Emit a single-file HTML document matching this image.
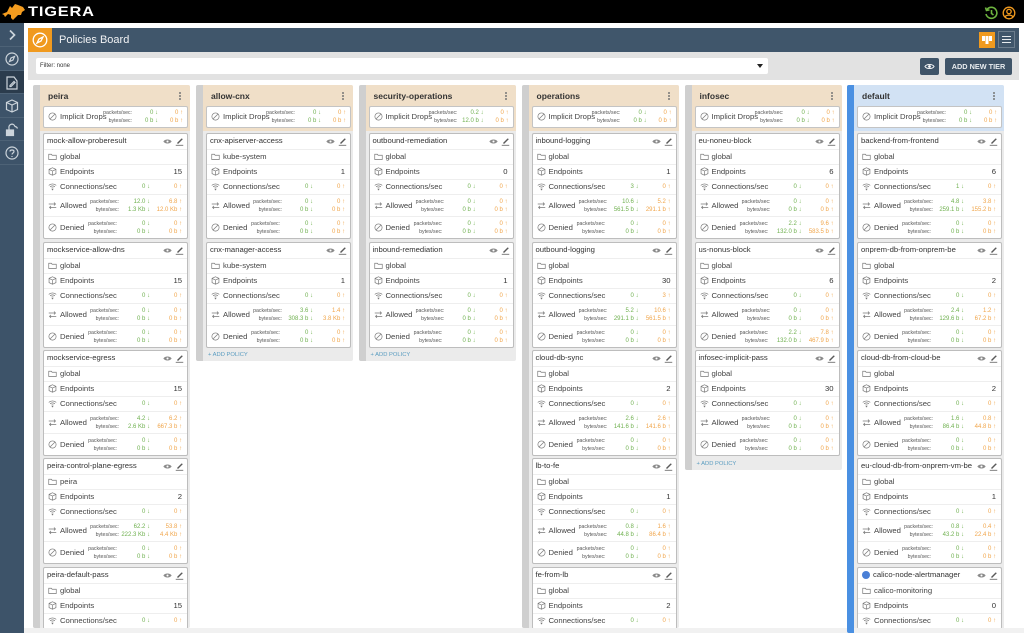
<!DOCTYPE html>
<html><head><meta charset="utf-8"><title>Policies Board</title>
<style>
*{box-sizing:border-box}
html{background:#fff}
html,body{margin:0;padding:0;width:1024px;height:633px;overflow:hidden}
body{position:relative;background:#fff;font-family:"Liberation Sans",sans-serif;color:#444;filter:blur(.35px)}
.top{position:absolute;left:0;top:0;width:1024px;height:23px;background:#000}
.brand{position:absolute;left:28px;top:3px;color:#fff;font-weight:bold;font-size:14px;letter-spacing:.7px;line-height:17px;transform:scaleX(1.17);transform-origin:0 0}
.side{position:absolute;left:0;top:23px;width:24px;height:610px;background:#3d5369}
.side div{position:absolute;left:0;width:24px;height:23.5px;border-bottom:1px solid #4d6276}
.side svg{position:absolute;left:5px;top:5px;width:14px;height:14px;fill:none;stroke:#ccd4db;stroke-width:1.2}
.tb{position:absolute;left:28px;top:28px;width:991px;height:24px;background:#40566b}
.tb span{position:absolute;left:31px;top:5px;color:#f0f2f4;font-size:11px;line-height:14px}
.or{position:absolute;left:0;top:0;width:24px;height:24px;background:#f09a1f}
.fb{position:absolute;left:28px;top:52px;width:991px;height:28px;background:#e2e2e2}
.fi{position:absolute;left:8px;top:6px;width:732px;height:16px;background:#fff;border-radius:2px;font-size:6px;line-height:16px;padding-left:4px;color:#333}
.btn{position:absolute;background:#3f5468;border-radius:2px;color:#e8ecef;font-size:7.3px;font-weight:bold;text-align:center;line-height:17px}
.col{position:absolute;top:85px;width:157px;background:#ebebeb;border-radius:2px;overflow:hidden}
.col:before{content:"";position:absolute;left:0;top:0;bottom:0;width:7px;background:#cfcfcf}
.hd{position:absolute;left:7px;right:0;top:0;height:46px;background:#f0dfc8}
.col h3{position:absolute;left:15px;top:6px;margin:0;font-size:8.5px;line-height:10px;color:#333}
.dots{position:absolute;right:9px;top:7px;width:2px;height:2px;border-radius:1px;background:#777;box-shadow:0 3px #777,0 6px #777;z-index:2}
.im{position:absolute;left:10px;top:21px;width:145px;height:22px;background:#fff;border:1px solid #c4c4c4;border-radius:2px;font-size:7.7px}
.im b{font-weight:normal;position:absolute;left:16px;top:5px;line-height:10px;white-space:nowrap}
.c{position:absolute;left:10px;width:145px;height:106px;background:#fff;border:1px solid #bdbdbd;border-radius:2px;font-size:7.7px;line-height:10px}
.c.e{height:62px;border-bottom:0}
.c h4{margin:0;position:absolute;left:3px;top:2px;font-weight:normal;font-size:7.7px;line-height:10px;white-space:nowrap;color:#333}
.c p{margin:0;position:absolute;left:0;right:0;height:15px;border-top:1px solid #eee;padding:2px 0 0 16px;white-space:nowrap}
.c p em{position:absolute;right:5px;top:2px;font-style:normal;color:#333}
.c>svg,.im>svg,.c p svg,.k svg{position:absolute;fill:none;stroke:#777;stroke-width:.9}
.ey{left:119px;top:3px;width:9px;height:9px}
.pe{left:131px;top:3px;width:9px;height:9px}
.ic{left:4px;top:2px;width:9px;height:9px}
.k{position:absolute;left:0;right:0;border-top:1px solid #eee;padding-left:16px;white-space:nowrap}
.k>b{font-weight:normal;position:absolute;left:16px}
.l,.d,.u{position:absolute;font-size:5.200px;line-height:8.4px;text-align:right;white-space:nowrap}
.l{color:#555}
.d,.g{color:#6fb04f}
.u,.o{color:#f0a54a}
.g,.o{position:absolute;top:3px;font-size:6px;line-height:8px;white-space:nowrap}
.g{right:37px}.o{right:5px}
.d{right:37px;font-size:6px}.u{right:5px;font-size:6px}
.add{position:absolute;left:12px;bottom:2px;font-size:5.8px;line-height:8px;color:#5a9cc0}
.bot{position:absolute;left:24px;top:628px;width:1000px;height:5px;background:#f1f1f1}
</style></head><body>
<svg width="0" height="0" style="position:absolute"><defs>
<symbol id="eye" viewBox="0 0 12 12"><path d="M1 6c2-3 8-3 10 0-2 3-8 3-10 0z" fill="#8a8a8a" stroke="#8a8a8a"/><circle cx="6" cy="6" r="1.4" fill="#fff" stroke="none"/></symbol>
<symbol id="pen" viewBox="0 0 12 12"><path d="M3 8L9 2l1 1-6 6z" fill="#555" stroke="#555" stroke-width=".6"/><path d="M1 11h10" stroke="#555"/></symbol>
<symbol id="ban" viewBox="0 0 12 12"><circle cx="6" cy="6" r="4.8"/><path d="M2.8 9.2l6.4-6.4"/></symbol>
<symbol id="fol" viewBox="0 0 12 12"><path d="M1 3h3.5l1 1.3H11v5.7H1z"/></symbol>
<symbol id="cub" viewBox="0 0 12 12"><path d="M6 1l4.6 2.2v5.6L6 11 1.4 8.8V3.2zM1.4 3.2L6 5.4l4.6-2.2M6 5.4V11"/></symbol>
<symbol id="wif" viewBox="0 0 12 12"><path d="M1 4.5c3-2.6 7-2.6 10 0M2.8 6.4c2-1.6 4.4-1.6 6.4 0M4.6 8.2c1-.7 1.8-.7 2.8 0"/><circle cx="6" cy="10" r=".6" fill="#666"/></symbol>
<symbol id="swp" viewBox="0 0 12 12"><path d="M1 4h9M8 2l2 2-2 2M11 8.500H2M4 6.500l-2 2 2 2"/></symbol>
</defs></svg>

<div class="top">
<svg style="position:absolute;left:1px;top:2px" width="26" height="20" viewBox="0 0 26 20"><path d="M1 12l5-2 3-6 2 2 3-4 3 1 5 2 2 3-3 2-1 3-3 0-3 3-2 2-2-2 0-3-3-1-3 3-1-2z" fill="#f39c1f"/></svg>
<div class="brand">TIGERA</div>
<svg style="position:absolute;left:984px;top:6px" width="14" height="14" viewBox="0 0 14 14" fill="none" stroke="#6db33f" stroke-width="1.6"><path d="M3 3.500A5.500 5.500 0 1 1 2 8M1.500 1.500l1 3 3-.6M7.500 4v3.500l2 1.500"/></svg>
<svg style="position:absolute;left:1002px;top:6px" width="14" height="14" viewBox="0 0 14 14" fill="none" stroke="#f09a1f" stroke-width="1.3"><circle cx="7" cy="7" r="5.800"/><circle cx="7" cy="5.500" r="2.200"/><path d="M3 11c1-2.500 7-2.500 8 0"/></svg>
</div>

<div class="side">
<div style="top:0"><svg viewBox="0 0 14 14"><path d="M5 2.500l4.500 4.500-4.500 4.500" stroke-width="1.700"/></svg></div>
<div style="top:24px"><svg viewBox="0 0 14 14"><circle cx="7" cy="7" r="6"/><path d="M4.500 9.500L6 6l3.500-1.500L8 8z"/></svg></div>
<div style="top:47.500px;background:#2b3c4d"><svg viewBox="0 0 14 14"><path d="M9 1H2v12h10V5zM5 9.500l4-4 1 1-4 4H5z"/></svg></div>
<div style="top:71px"><svg viewBox="0 0 14 14"><path d="M7 1l5.500 2.500v7L7 13l-5.500-2.500v-7zM1.500 3.500L7 6l5.500-2.500M7 6v7"/></svg></div>
<div style="top:94.500px"><svg viewBox="0 0 14 14"><rect x="1.500" y="7" width="7" height="5.500" fill="#ccd4db"/><path d="M4 7V5a3 3 0 0 1 6-1.500 3 3 0 0 1 2.500 2"/></svg></div>
<div style="top:118px"><svg viewBox="0 0 14 14"><circle cx="7" cy="7" r="6"/><path d="M5 5.500C5 3.500 9 3.500 9 5.500 9 7 7 7 7 8.500M7 10v1"/></svg></div>
</div>

<div class="tb"><div class="or"><svg style="position:absolute;left:4px;top:4px" width="16" height="16" viewBox="0 0 16 16" fill="none" stroke="#fff" stroke-width="1.300"><circle cx="8" cy="8" r="6.800"/><path d="M5 11l2-4 4-2-2 4z"/></svg></div><span>Policies Board</span>
<div style="position:absolute;left:951px;top:4px;width:16px;height:16px;background:#f09a1f"><svg style="position:absolute;left:3px;top:3px" width="10" height="10" viewBox="0 0 10 10" fill="#fff"><path d="M0 1h3v5H0zM3.500 1h3v8h-3zM7 1h3v5H7z"/></svg></div>
<div style="position:absolute;left:970px;top:3px;width:17px;height:17px;border:1px solid #6c7d8d"><svg style="position:absolute;left:3px;top:3px" width="9" height="9" viewBox="0 0 9 9" stroke="#e8ecef"><path d="M0 1.500h9M0 4.500h9M0 7.500h9"/></svg></div>
</div>

<div class="fb"><div class="fi">Filter: none<div style="position:absolute;right:5px;top:6px;border:3px solid transparent;border-top:4px solid #222"></div></div></div>
<div class="btn" style="left:920px;top:58px;width:19px;height:17px"><svg style="position:absolute;left:4px;top:3px" width="11" height="11" viewBox="0 0 12 12"><path d="M1 6c2-3 8-3 10 0-2 3-8 3-10 0z" fill="none" stroke="#fff"/><circle cx="6" cy="6" r="1.500" fill="#fff"/></svg></div>
<div class="btn" style="left:945px;top:58px;width:67px;height:17px">ADD NEW TIER</div>

<!-- peira -->
<div class="col" style="left:33px;height:543px"><div class="hd"></div><h3>peira</h3><div class="dots"></div>
<div class="im"><svg class="ic" style="top:5px"><use href="#ban"/></svg><b>Implicit Drops</b><span class="l" style="right:55px;top:2px">packets/sec:<br>bytes/sec:</span><span class="d" style="right:29px;top:2px">0 ↓<br>0 b ↓</span><span class="u" style="top:2px;right:4px">0 ↑<br>0 b ↑</span></div>

<div class="c" style="top:48px"><h4>mock-allow-proberesult</h4><svg class="ey"><use href="#eye"/></svg><svg class="pe"><use href="#pen"/></svg>
<p style="top:15px"><svg class="ic"><use href="#fol"/></svg>global</p>
<p style="top:30px"><svg class="ic"><use href="#cub"/></svg>Endpoints<em>15</em></p>
<p style="top:45px"><svg class="ic"><use href="#wif"/></svg>Connections/sec<span class="g">0 ↓</span><span class="o">0 ↑</span></p>
<div class="k" style="top:60px;height:23px"><svg class="ic" style="top:6px"><use href="#swp"/></svg><b style="top:6px">Allowed</b><span class="l" style="right:68px;top:3px">packets/sec:<br>bytes/sec:</span><span class="d" style="top:3px">12.0 ↓<br>1.3 Kb ↓</span><span class="u" style="top:3px">6.8 ↑<br>12.0 Kb ↑</span></div>
<div class="k" style="top:82px;height:22px"><svg class="ic" style="top:6px"><use href="#ban"/></svg><b style="top:6px">Denied</b><span class="l" style="right:70px;top:3px">packets/sec:<br>bytes/sec:</span><span class="d" style="top:3px">0 ↓<br>0 b ↓</span><span class="u" style="top:3px">0 ↑<br>0 b ↑</span></div></div>

<div class="c" style="top:156.500px"><h4>mockservice-allow-dns</h4><svg class="ey"><use href="#eye"/></svg><svg class="pe"><use href="#pen"/></svg>
<p style="top:15px"><svg class="ic"><use href="#fol"/></svg>global</p>
<p style="top:30px"><svg class="ic"><use href="#cub"/></svg>Endpoints<em>15</em></p>
<p style="top:45px"><svg class="ic"><use href="#wif"/></svg>Connections/sec<span class="g">0 ↓</span><span class="o">0 ↑</span></p>
<div class="k" style="top:60px;height:23px"><svg class="ic" style="top:6px"><use href="#swp"/></svg><b style="top:6px">Allowed</b><span class="l" style="right:68px;top:3px">packets/sec:<br>bytes/sec:</span><span class="d" style="top:3px">0 ↓<br>0 b ↓</span><span class="u" style="top:3px">0 ↑<br>0 b ↑</span></div>
<div class="k" style="top:82px;height:22px"><svg class="ic" style="top:6px"><use href="#ban"/></svg><b style="top:6px">Denied</b><span class="l" style="right:70px;top:3px">packets/sec:<br>bytes/sec:</span><span class="d" style="top:3px">0 ↓<br>0 b ↓</span><span class="u" style="top:3px">0 ↑<br>0 b ↑</span></div></div>

<div class="c" style="top:265px"><h4>mockservice-egress</h4><svg class="ey"><use href="#eye"/></svg><svg class="pe"><use href="#pen"/></svg>
<p style="top:15px"><svg class="ic"><use href="#fol"/></svg>global</p>
<p style="top:30px"><svg class="ic"><use href="#cub"/></svg>Endpoints<em>15</em></p>
<p style="top:45px"><svg class="ic"><use href="#wif"/></svg>Connections/sec<span class="g">0 ↓</span><span class="o">0 ↑</span></p>
<div class="k" style="top:60px;height:23px"><svg class="ic" style="top:6px"><use href="#swp"/></svg><b style="top:6px">Allowed</b><span class="l" style="right:68px;top:3px">packets/sec:<br>bytes/sec:</span><span class="d" style="top:3px">4.2 ↓<br>2.6 Kb ↓</span><span class="u" style="top:3px">6.2 ↑<br>667.3 b ↑</span></div>
<div class="k" style="top:82px;height:22px"><svg class="ic" style="top:6px"><use href="#ban"/></svg><b style="top:6px">Denied</b><span class="l" style="right:70px;top:3px">packets/sec:<br>bytes/sec:</span><span class="d" style="top:3px">0 ↓<br>0 b ↓</span><span class="u" style="top:3px">0 ↑<br>0 b ↑</span></div></div>

<div class="c" style="top:373px"><h4>peira-control-plane-egress</h4><svg class="ey"><use href="#eye"/></svg><svg class="pe"><use href="#pen"/></svg>
<p style="top:15px"><svg class="ic"><use href="#fol"/></svg>peira</p>
<p style="top:30px"><svg class="ic"><use href="#cub"/></svg>Endpoints<em>2</em></p>
<p style="top:45px"><svg class="ic"><use href="#wif"/></svg>Connections/sec<span class="g">0 ↓</span><span class="o">0 ↑</span></p>
<div class="k" style="top:60px;height:23px"><svg class="ic" style="top:6px"><use href="#swp"/></svg><b style="top:6px">Allowed</b><span class="l" style="right:68px;top:3px">packets/sec:<br>bytes/sec:</span><span class="d" style="top:3px">62.2 ↓<br>222.3 Kb ↓</span><span class="u" style="top:3px">53.8 ↑<br>4.4 Kb ↑</span></div>
<div class="k" style="top:82px;height:22px"><svg class="ic" style="top:6px"><use href="#ban"/></svg><b style="top:6px">Denied</b><span class="l" style="right:70px;top:3px">packets/sec:<br>bytes/sec:</span><span class="d" style="top:3px">0 ↓<br>0 b ↓</span><span class="u" style="top:3px">0 ↑<br>0 b ↑</span></div></div>

<div class="c e" style="top:481.500px"><h4>peira-default-pass</h4><svg class="ey"><use href="#eye"/></svg><svg class="pe"><use href="#pen"/></svg>
<p style="top:15px"><svg class="ic"><use href="#fol"/></svg>global</p>
<p style="top:30px"><svg class="ic"><use href="#cub"/></svg>Endpoints<em>15</em></p>
<p style="top:45px"><svg class="ic"><use href="#wif"/></svg>Connections/sec<span class="g">0 ↓</span><span class="o">0 ↑</span></p></div>
</div>

<!-- allow-cnx -->
<div class="col" style="left:196px;height:276px"><div class="hd"></div><h3>allow-cnx</h3><div class="dots"></div>
<div class="im"><svg class="ic" style="top:5px"><use href="#ban"/></svg><b>Implicit Drops</b><span class="l" style="right:55px;top:2px">packets/sec:<br>bytes/sec:</span><span class="d" style="right:29px;top:2px">0 ↓<br>0 b ↓</span><span class="u" style="top:2px;right:4px">0 ↑<br>0 b ↑</span></div>

<div class="c" style="top:48px"><h4>cnx-apiserver-access</h4><svg class="ey"><use href="#eye"/></svg><svg class="pe"><use href="#pen"/></svg>
<p style="top:15px"><svg class="ic"><use href="#fol"/></svg>kube-system</p>
<p style="top:30px"><svg class="ic"><use href="#cub"/></svg>Endpoints<em>1</em></p>
<p style="top:45px"><svg class="ic"><use href="#wif"/></svg>Connections/sec<span class="g">0 ↓</span><span class="o">0 ↑</span></p>
<div class="k" style="top:60px;height:23px"><svg class="ic" style="top:6px"><use href="#swp"/></svg><b style="top:6px">Allowed</b><span class="l" style="right:68px;top:3px">packets/sec:<br>bytes/sec:</span><span class="d" style="top:3px">0 ↓<br>0 b ↓</span><span class="u" style="top:3px">0 ↑<br>0 b ↑</span></div>
<div class="k" style="top:82px;height:22px"><svg class="ic" style="top:6px"><use href="#ban"/></svg><b style="top:6px">Denied</b><span class="l" style="right:70px;top:3px">packets/sec:<br>bytes/sec:</span><span class="d" style="top:3px">0 ↓<br>0 b ↓</span><span class="u" style="top:3px">0 ↑<br>0 b ↑</span></div></div>

<div class="c" style="top:156.500px"><h4>cnx-manager-access</h4><svg class="ey"><use href="#eye"/></svg><svg class="pe"><use href="#pen"/></svg>
<p style="top:15px"><svg class="ic"><use href="#fol"/></svg>kube-system</p>
<p style="top:30px"><svg class="ic"><use href="#cub"/></svg>Endpoints<em>1</em></p>
<p style="top:45px"><svg class="ic"><use href="#wif"/></svg>Connections/sec<span class="g">0 ↓</span><span class="o">0 ↑</span></p>
<div class="k" style="top:60px;height:23px"><svg class="ic" style="top:6px"><use href="#swp"/></svg><b style="top:6px">Allowed</b><span class="l" style="right:68px;top:3px">packets/sec:<br>bytes/sec:</span><span class="d" style="top:3px">3.6 ↓<br>308.3 b ↓</span><span class="u" style="top:3px">1.4 ↑<br>3.8 Kb ↑</span></div>
<div class="k" style="top:82px;height:22px"><svg class="ic" style="top:6px"><use href="#ban"/></svg><b style="top:6px">Denied</b><span class="l" style="right:70px;top:3px">packets/sec:<br>bytes/sec:</span><span class="d" style="top:3px">0 ↓<br>0 b ↓</span><span class="u" style="top:3px">0 ↑<br>0 b ↑</span></div></div>
<div class="add">+ ADD POLICY</div>
</div>

<!-- security-operations -->
<div class="col" style="left:358.500px;height:276px"><div class="hd"></div><h3>security-operations</h3><div class="dots"></div>
<div class="im"><svg class="ic" style="top:5px"><use href="#ban"/></svg><b>Implicit Drops</b><span class="l" style="right:55px;top:2px">packets/sec:<br>bytes/sec:</span><span class="d" style="right:29px;top:2px">0.2 ↓<br>12.0 b ↓</span><span class="u" style="top:2px;right:4px">0 ↑<br>0 b ↑</span></div>

<div class="c" style="top:48px"><h4>outbound-remediation</h4><svg class="ey"><use href="#eye"/></svg><svg class="pe"><use href="#pen"/></svg>
<p style="top:15px"><svg class="ic"><use href="#fol"/></svg>global</p>
<p style="top:30px"><svg class="ic"><use href="#cub"/></svg>Endpoints<em>0</em></p>
<p style="top:45px"><svg class="ic"><use href="#wif"/></svg>Connections/sec<span class="g">0 ↓</span><span class="o">0 ↑</span></p>
<div class="k" style="top:60px;height:23px"><svg class="ic" style="top:6px"><use href="#swp"/></svg><b style="top:6px">Allowed</b><span class="l" style="right:68px;top:3px">packets/sec:<br>bytes/sec:</span><span class="d" style="top:3px">0 ↓<br>0 b ↓</span><span class="u" style="top:3px">0 ↑<br>0 b ↑</span></div>
<div class="k" style="top:82px;height:22px"><svg class="ic" style="top:6px"><use href="#ban"/></svg><b style="top:6px">Denied</b><span class="l" style="right:70px;top:3px">packets/sec:<br>bytes/sec:</span><span class="d" style="top:3px">0 ↓<br>0 b ↓</span><span class="u" style="top:3px">0 ↑<br>0 b ↑</span></div></div>

<div class="c" style="top:156.500px"><h4>inbound-remediation</h4><svg class="ey"><use href="#eye"/></svg><svg class="pe"><use href="#pen"/></svg>
<p style="top:15px"><svg class="ic"><use href="#fol"/></svg>global</p>
<p style="top:30px"><svg class="ic"><use href="#cub"/></svg>Endpoints<em>1</em></p>
<p style="top:45px"><svg class="ic"><use href="#wif"/></svg>Connections/sec<span class="g">0 ↓</span><span class="o">0 ↑</span></p>
<div class="k" style="top:60px;height:23px"><svg class="ic" style="top:6px"><use href="#swp"/></svg><b style="top:6px">Allowed</b><span class="l" style="right:68px;top:3px">packets/sec:<br>bytes/sec:</span><span class="d" style="top:3px">0 ↓<br>0 b ↓</span><span class="u" style="top:3px">0 ↑<br>0 b ↑</span></div>
<div class="k" style="top:82px;height:22px"><svg class="ic" style="top:6px"><use href="#ban"/></svg><b style="top:6px">Denied</b><span class="l" style="right:70px;top:3px">packets/sec:<br>bytes/sec:</span><span class="d" style="top:3px">0 ↓<br>0 b ↓</span><span class="u" style="top:3px">0 ↑<br>0 b ↑</span></div></div>
<div class="add">+ ADD POLICY</div>
</div>

<!-- operations -->
<div class="col" style="left:521.500px;height:543px"><div class="hd"></div><h3>operations</h3><div class="dots"></div>
<div class="im"><svg class="ic" style="top:5px"><use href="#ban"/></svg><b>Implicit Drops</b><span class="l" style="right:55px;top:2px">packets/sec:<br>bytes/sec:</span><span class="d" style="right:29px;top:2px">0 ↓<br>0 b ↓</span><span class="u" style="top:2px;right:4px">0 ↑<br>0 b ↑</span></div>

<div class="c" style="top:48px"><h4>inbound-logging</h4><svg class="ey"><use href="#eye"/></svg><svg class="pe"><use href="#pen"/></svg>
<p style="top:15px"><svg class="ic"><use href="#fol"/></svg>global</p>
<p style="top:30px"><svg class="ic"><use href="#cub"/></svg>Endpoints<em>1</em></p>
<p style="top:45px"><svg class="ic"><use href="#wif"/></svg>Connections/sec<span class="g">3 ↓</span><span class="o">0 ↑</span></p>
<div class="k" style="top:60px;height:23px"><svg class="ic" style="top:6px"><use href="#swp"/></svg><b style="top:6px">Allowed</b><span class="l" style="right:68px;top:3px">packets/sec:<br>bytes/sec:</span><span class="d" style="top:3px">10.6 ↓<br>561.5 b ↓</span><span class="u" style="top:3px">5.2 ↑<br>291.1 b ↑</span></div>
<div class="k" style="top:82px;height:22px"><svg class="ic" style="top:6px"><use href="#ban"/></svg><b style="top:6px">Denied</b><span class="l" style="right:70px;top:3px">packets/sec:<br>bytes/sec:</span><span class="d" style="top:3px">0 ↓<br>0 b ↓</span><span class="u" style="top:3px">0 ↑<br>0 b ↑</span></div></div>

<div class="c" style="top:156.500px"><h4>outbound-logging</h4><svg class="ey"><use href="#eye"/></svg><svg class="pe"><use href="#pen"/></svg>
<p style="top:15px"><svg class="ic"><use href="#fol"/></svg>global</p>
<p style="top:30px"><svg class="ic"><use href="#cub"/></svg>Endpoints<em>30</em></p>
<p style="top:45px"><svg class="ic"><use href="#wif"/></svg>Connections/sec<span class="g">0 ↓</span><span class="o">3 ↑</span></p>
<div class="k" style="top:60px;height:23px"><svg class="ic" style="top:6px"><use href="#swp"/></svg><b style="top:6px">Allowed</b><span class="l" style="right:68px;top:3px">packets/sec:<br>bytes/sec:</span><span class="d" style="top:3px">5.2 ↓<br>291.1 b ↓</span><span class="u" style="top:3px">10.6 ↑<br>561.5 b ↑</span></div>
<div class="k" style="top:82px;height:22px"><svg class="ic" style="top:6px"><use href="#ban"/></svg><b style="top:6px">Denied</b><span class="l" style="right:70px;top:3px">packets/sec:<br>bytes/sec:</span><span class="d" style="top:3px">0 ↓<br>0 b ↓</span><span class="u" style="top:3px">0 ↑<br>0 b ↑</span></div></div>

<div class="c" style="top:265px"><h4>cloud-db-sync</h4><svg class="ey"><use href="#eye"/></svg><svg class="pe"><use href="#pen"/></svg>
<p style="top:15px"><svg class="ic"><use href="#fol"/></svg>global</p>
<p style="top:30px"><svg class="ic"><use href="#cub"/></svg>Endpoints<em>2</em></p>
<p style="top:45px"><svg class="ic"><use href="#wif"/></svg>Connections/sec<span class="g">0 ↓</span><span class="o">0 ↑</span></p>
<div class="k" style="top:60px;height:23px"><svg class="ic" style="top:6px"><use href="#swp"/></svg><b style="top:6px">Allowed</b><span class="l" style="right:68px;top:3px">packets/sec:<br>bytes/sec:</span><span class="d" style="top:3px">2.6 ↓<br>141.6 b ↓</span><span class="u" style="top:3px">2.6 ↑<br>141.6 b ↑</span></div>
<div class="k" style="top:82px;height:22px"><svg class="ic" style="top:6px"><use href="#ban"/></svg><b style="top:6px">Denied</b><span class="l" style="right:70px;top:3px">packets/sec:<br>bytes/sec:</span><span class="d" style="top:3px">0 ↓<br>0 b ↓</span><span class="u" style="top:3px">0 ↑<br>0 b ↑</span></div></div>

<div class="c" style="top:373px"><h4>lb-to-fe</h4><svg class="ey"><use href="#eye"/></svg><svg class="pe"><use href="#pen"/></svg>
<p style="top:15px"><svg class="ic"><use href="#fol"/></svg>global</p>
<p style="top:30px"><svg class="ic"><use href="#cub"/></svg>Endpoints<em>1</em></p>
<p style="top:45px"><svg class="ic"><use href="#wif"/></svg>Connections/sec<span class="g">0 ↓</span><span class="o">0 ↑</span></p>
<div class="k" style="top:60px;height:23px"><svg class="ic" style="top:6px"><use href="#swp"/></svg><b style="top:6px">Allowed</b><span class="l" style="right:68px;top:3px">packets/sec:<br>bytes/sec:</span><span class="d" style="top:3px">0.8 ↓<br>44.8 b ↓</span><span class="u" style="top:3px">1.6 ↑<br>86.4 b ↑</span></div>
<div class="k" style="top:82px;height:22px"><svg class="ic" style="top:6px"><use href="#ban"/></svg><b style="top:6px">Denied</b><span class="l" style="right:70px;top:3px">packets/sec:<br>bytes/sec:</span><span class="d" style="top:3px">0 ↓<br>0 b ↓</span><span class="u" style="top:3px">0 ↑<br>0 b ↑</span></div></div>

<div class="c e" style="top:481.500px"><h4>fe-from-lb</h4><svg class="ey"><use href="#eye"/></svg><svg class="pe"><use href="#pen"/></svg>
<p style="top:15px"><svg class="ic"><use href="#fol"/></svg>global</p>
<p style="top:30px"><svg class="ic"><use href="#cub"/></svg>Endpoints<em>2</em></p>
<p style="top:45px"><svg class="ic"><use href="#wif"/></svg>Connections/sec<span class="g">0 ↓</span><span class="o">0 ↑</span></p></div>
</div>

<!-- infosec -->
<div class="col" style="left:684.500px;height:385px"><div class="hd"></div><h3>infosec</h3><div class="dots"></div>
<div class="im"><svg class="ic" style="top:5px"><use href="#ban"/></svg><b>Implicit Drops</b><span class="l" style="right:55px;top:2px">packets/sec:<br>bytes/sec:</span><span class="d" style="right:29px;top:2px">0 ↓<br>0 b ↓</span><span class="u" style="top:2px;right:4px">0 ↑<br>0 b ↑</span></div>

<div class="c" style="top:48px"><h4>eu-noneu-block</h4><svg class="ey"><use href="#eye"/></svg><svg class="pe"><use href="#pen"/></svg>
<p style="top:15px"><svg class="ic"><use href="#fol"/></svg>global</p>
<p style="top:30px"><svg class="ic"><use href="#cub"/></svg>Endpoints<em>6</em></p>
<p style="top:45px"><svg class="ic"><use href="#wif"/></svg>Connections/sec<span class="g">0 ↓</span><span class="o">0 ↑</span></p>
<div class="k" style="top:60px;height:23px"><svg class="ic" style="top:6px"><use href="#swp"/></svg><b style="top:6px">Allowed</b><span class="l" style="right:68px;top:3px">packets/sec:<br>bytes/sec:</span><span class="d" style="top:3px">0 ↓<br>0 b ↓</span><span class="u" style="top:3px">0 ↑<br>0 b ↑</span></div>
<div class="k" style="top:82px;height:22px"><svg class="ic" style="top:6px"><use href="#ban"/></svg><b style="top:6px">Denied</b><span class="l" style="right:70px;top:3px">packets/sec:<br>bytes/sec:</span><span class="d" style="top:3px">2.2 ↓<br>132.0 b ↓</span><span class="u" style="top:3px">9.6 ↑<br>583.5 b ↑</span></div></div>

<div class="c" style="top:156.500px"><h4>us-nonus-block</h4><svg class="ey"><use href="#eye"/></svg><svg class="pe"><use href="#pen"/></svg>
<p style="top:15px"><svg class="ic"><use href="#fol"/></svg>global</p>
<p style="top:30px"><svg class="ic"><use href="#cub"/></svg>Endpoints<em>6</em></p>
<p style="top:45px"><svg class="ic"><use href="#wif"/></svg>Connections/sec<span class="g">0 ↓</span><span class="o">0 ↑</span></p>
<div class="k" style="top:60px;height:23px"><svg class="ic" style="top:6px"><use href="#swp"/></svg><b style="top:6px">Allowed</b><span class="l" style="right:68px;top:3px">packets/sec:<br>bytes/sec:</span><span class="d" style="top:3px">0 ↓<br>0 b ↓</span><span class="u" style="top:3px">0 ↑<br>0 b ↑</span></div>
<div class="k" style="top:82px;height:22px"><svg class="ic" style="top:6px"><use href="#ban"/></svg><b style="top:6px">Denied</b><span class="l" style="right:70px;top:3px">packets/sec:<br>bytes/sec:</span><span class="d" style="top:3px">2.2 ↓<br>132.0 b ↓</span><span class="u" style="top:3px">7.8 ↑<br>467.9 b ↑</span></div></div>

<div class="c" style="top:265px"><h4>infosec-implicit-pass</h4><svg class="ey"><use href="#eye"/></svg><svg class="pe"><use href="#pen"/></svg>
<p style="top:15px"><svg class="ic"><use href="#fol"/></svg>global</p>
<p style="top:30px"><svg class="ic"><use href="#cub"/></svg>Endpoints<em>30</em></p>
<p style="top:45px"><svg class="ic"><use href="#wif"/></svg>Connections/sec<span class="g">0 ↓</span><span class="o">0 ↑</span></p>
<div class="k" style="top:60px;height:23px"><svg class="ic" style="top:6px"><use href="#swp"/></svg><b style="top:6px">Allowed</b><span class="l" style="right:68px;top:3px">packets/sec:<br>bytes/sec:</span><span class="d" style="top:3px">0 ↓<br>0 b ↓</span><span class="u" style="top:3px">0 ↑<br>0 b ↑</span></div>
<div class="k" style="top:82px;height:22px"><svg class="ic" style="top:6px"><use href="#ban"/></svg><b style="top:6px">Denied</b><span class="l" style="right:70px;top:3px">packets/sec:<br>bytes/sec:</span><span class="d" style="top:3px">0 ↓<br>0 b ↓</span><span class="u" style="top:3px">0 ↑<br>0 b ↑</span></div></div>
<div class="add">+ ADD POLICY</div>
</div>

<!-- default -->
<div class="col" style="left:847px;height:548px"><div class="hd" style="background:#d2e2f4"></div><div style="position:absolute;left:0;top:0;bottom:0;width:7px;background:#4a90e2;z-index:1"></div><h3>default</h3><div class="dots"></div>
<div class="im"><svg class="ic" style="top:5px"><use href="#ban"/></svg><b>Implicit Drops</b><span class="l" style="right:55px;top:2px">packets/sec:<br>bytes/sec:</span><span class="d" style="right:29px;top:2px">0 ↓<br>0 b ↓</span><span class="u" style="top:2px;right:4px">0 ↑<br>0 b ↑</span></div>

<div class="c" style="top:48px"><h4>backend-from-frontend</h4><svg class="ey"><use href="#eye"/></svg><svg class="pe"><use href="#pen"/></svg>
<p style="top:15px"><svg class="ic"><use href="#fol"/></svg>global</p>
<p style="top:30px"><svg class="ic"><use href="#cub"/></svg>Endpoints<em>6</em></p>
<p style="top:45px"><svg class="ic"><use href="#wif"/></svg>Connections/sec<span class="g">1 ↓</span><span class="o">0 ↑</span></p>
<div class="k" style="top:60px;height:23px"><svg class="ic" style="top:6px"><use href="#swp"/></svg><b style="top:6px">Allowed</b><span class="l" style="right:68px;top:3px">packets/sec:<br>bytes/sec:</span><span class="d" style="top:3px">4.8 ↓<br>259.1 b ↓</span><span class="u" style="top:3px">3.8 ↑<br>155.2 b ↑</span></div>
<div class="k" style="top:82px;height:22px"><svg class="ic" style="top:6px"><use href="#ban"/></svg><b style="top:6px">Denied</b><span class="l" style="right:70px;top:3px">packets/sec:<br>bytes/sec:</span><span class="d" style="top:3px">0 ↓<br>0 b ↓</span><span class="u" style="top:3px">0 ↑<br>0 b ↑</span></div></div>

<div class="c" style="top:156.500px"><h4>onprem-db-from-onprem-be</h4><svg class="ey"><use href="#eye"/></svg><svg class="pe"><use href="#pen"/></svg>
<p style="top:15px"><svg class="ic"><use href="#fol"/></svg>global</p>
<p style="top:30px"><svg class="ic"><use href="#cub"/></svg>Endpoints<em>2</em></p>
<p style="top:45px"><svg class="ic"><use href="#wif"/></svg>Connections/sec<span class="g">0 ↓</span><span class="o">0 ↑</span></p>
<div class="k" style="top:60px;height:23px"><svg class="ic" style="top:6px"><use href="#swp"/></svg><b style="top:6px">Allowed</b><span class="l" style="right:68px;top:3px">packets/sec:<br>bytes/sec:</span><span class="d" style="top:3px">2.4 ↓<br>129.6 b ↓</span><span class="u" style="top:3px">1.2 ↑<br>67.2 b ↑</span></div>
<div class="k" style="top:82px;height:22px"><svg class="ic" style="top:6px"><use href="#ban"/></svg><b style="top:6px">Denied</b><span class="l" style="right:70px;top:3px">packets/sec:<br>bytes/sec:</span><span class="d" style="top:3px">0 ↓<br>0 b ↓</span><span class="u" style="top:3px">0 ↑<br>0 b ↑</span></div></div>

<div class="c" style="top:265px"><h4>cloud-db-from-cloud-be</h4><svg class="ey"><use href="#eye"/></svg><svg class="pe"><use href="#pen"/></svg>
<p style="top:15px"><svg class="ic"><use href="#fol"/></svg>global</p>
<p style="top:30px"><svg class="ic"><use href="#cub"/></svg>Endpoints<em>2</em></p>
<p style="top:45px"><svg class="ic"><use href="#wif"/></svg>Connections/sec<span class="g">0 ↓</span><span class="o">0 ↑</span></p>
<div class="k" style="top:60px;height:23px"><svg class="ic" style="top:6px"><use href="#swp"/></svg><b style="top:6px">Allowed</b><span class="l" style="right:68px;top:3px">packets/sec:<br>bytes/sec:</span><span class="d" style="top:3px">1.6 ↓<br>86.4 b ↓</span><span class="u" style="top:3px">0.8 ↑<br>44.8 b ↑</span></div>
<div class="k" style="top:82px;height:22px"><svg class="ic" style="top:6px"><use href="#ban"/></svg><b style="top:6px">Denied</b><span class="l" style="right:70px;top:3px">packets/sec:<br>bytes/sec:</span><span class="d" style="top:3px">0 ↓<br>0 b ↓</span><span class="u" style="top:3px">0 ↑<br>0 b ↑</span></div></div>

<div class="c" style="top:373px"><h4>eu-cloud-db-from-onprem-vm-be</h4><svg class="ey"><use href="#eye"/></svg><svg class="pe"><use href="#pen"/></svg>
<p style="top:15px"><svg class="ic"><use href="#fol"/></svg>global</p>
<p style="top:30px"><svg class="ic"><use href="#cub"/></svg>Endpoints<em>1</em></p>
<p style="top:45px"><svg class="ic"><use href="#wif"/></svg>Connections/sec<span class="g">0 ↓</span><span class="o">0 ↑</span></p>
<div class="k" style="top:60px;height:23px"><svg class="ic" style="top:6px"><use href="#swp"/></svg><b style="top:6px">Allowed</b><span class="l" style="right:68px;top:3px">packets/sec:<br>bytes/sec:</span><span class="d" style="top:3px">0.8 ↓<br>43.2 b ↓</span><span class="u" style="top:3px">0.4 ↑<br>22.4 b ↑</span></div>
<div class="k" style="top:82px;height:22px"><svg class="ic" style="top:6px"><use href="#ban"/></svg><b style="top:6px">Denied</b><span class="l" style="right:70px;top:3px">packets/sec:<br>bytes/sec:</span><span class="d" style="top:3px">0 ↓<br>0 b ↓</span><span class="u" style="top:3px">0 ↑<br>0 b ↑</span></div></div>

<div class="c e" style="top:481.500px"><div style="position:absolute;left:4px;top:3px;width:8px;height:8px;border-radius:50%;background:#4a7fd6"></div><h4 style="left:15px">calico-node-alertmanager</h4><svg class="ey"><use href="#eye"/></svg><svg class="pe"><use href="#pen"/></svg>
<p style="top:15px"><svg class="ic"><use href="#fol"/></svg>calico-monitoring</p>
<p style="top:30px"><svg class="ic"><use href="#cub"/></svg>Endpoints<em>0</em></p>
<p style="top:45px"><svg class="ic"><use href="#wif"/></svg>Connections/sec<span class="g">0 ↓</span><span class="o">0 ↑</span></p></div>
</div>

<div class="bot"></div>
</body></html>
